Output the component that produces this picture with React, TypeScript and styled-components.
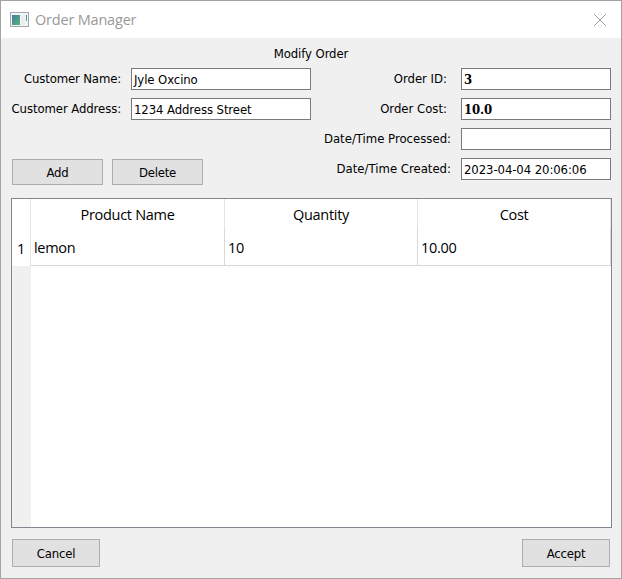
import React from 'react';
import styled, { createGlobalStyle } from 'styled-components';

const Global = createGlobalStyle`
  *, *::before, *::after { box-sizing: border-box; }
  body { margin: 0; overflow: hidden; }
`;

const Dialog = styled.main`
  width: 622px;
  height: 579px;
  border: 1px solid #a3a3a3;
  background: #f0f0f0;
  color: #000;
  font: 13px/16px 'DejaVu Sans Condensed', 'DejaVu Sans', sans-serif;
  font-stretch: condensed;
  letter-spacing: -0.09px;
  display: flex;
  flex-direction: column;
`;
const TitleBar = styled.header`
  height: 37px;
  flex: none;
  display: flex;
  align-items: center;
  padding: 0 14px 0 9px;
  background: #fff;
`;
const Title = styled.h1`
  margin: 0 auto 0 6px;
  font: 400 14.5px/20px 'Open Sans', 'Noto Sans', sans-serif;
  letter-spacing: -0.2px;
  color: #999;
`;
const Heading = styled.h2`
  margin: 8px 0 6px;
  height: 16px;
  font: inherit;
  text-align: center;
`;
const Form = styled.section`
  display: flex;
  justify-content: space-between;
  height: 130px;
  padding: 0 10px;
`;
const Fields = styled.div<{ $label: number; $field: number }>`
  display: grid;
  grid-template-columns: ${p => p.$label}px ${p => p.$field}px;
  grid-auto-rows: 22px;
  row-gap: 8px;
`;
const Label = styled.label<{ $gap: number; $track?: number }>`
  text-align: right;
  white-space: nowrap;
  line-height: 22px;
  padding-right: ${p => p.$gap}px;
  letter-spacing: ${p => p.$track ?? -0.09}px;
`;
const Field = styled.div<{ $strong?: boolean }>`
  border: 1px solid #7a7a7a;
  background: #fff;
  padding: 0 2px;
  white-space: nowrap;
  line-height: 22px;
  ${p => p.$strong && `font-family: 'DejaVu Serif', serif; font-weight: 700;`}
`;
const EditActions = styled.div`
  display: flex;
  gap: 9px;
  padding: 39px 0 0 1px;
`;
const Button = styled.button<{ $w: number; $h: number }>`
  width: ${p => p.$w}px;
  height: ${p => p.$h}px;
  padding: 2px 0 0;
  border: 1px solid #adadad;
  background: #e1e1e1;
  color: #000;
  font: inherit;
  letter-spacing: -0.2px;
`;
const TableFrame = styled.section`
  margin: 0 9px 0 10px;
  height: 330px;
  border: 1px solid #828790;
  background: linear-gradient(90deg, #f0f0f0 19px, #fff 19px);
`;
const Table = styled.div`
  display: grid;
  grid-template-columns: 19px 194px 193px 193px;
  grid-template-rows: 30px 37px;
  font: 14.5px/20px 'Open Sans', 'Noto Sans', sans-serif;
  letter-spacing: -0.3px;
`;
const HeaderCell = styled.div`
  background: #fff;
  border-right: 1px solid #e5e5e5;
  text-align: center;
  padding-top: 6px;
`;
const Cell = styled.div`
  background: #fff;
  border: solid #d8d8d8;
  border-width: 0 1px 1px 0;
  padding: 9px 0 0 3px;
`;
const RowNumber = styled.div`
  background: #fff;
  border-right: 1px solid #e5e5e5;
  padding: 10px 0 0;
  text-align: center;
`;
const Footer = styled.footer`
  display: flex;
  justify-content: space-between;
  padding: 11px 11px 0;
`;

function AppIcon() {
  return (
    <svg width="19" height="15" viewBox="0 0 19 15" shapeRendering="crispEdges">
      <defs>
        <linearGradient id="screen" x1="0" y1="0" x2="1" y2="1">
          <stop offset="0" stopColor="#4779a0" />
          <stop offset="1" stopColor="#55b67b" />
        </linearGradient>
      </defs>
      <rect x="0.5" y="0.5" width="18" height="14" fill="#f4f5f6" stroke="#a0a7ad" />
      <rect x="2" y="3" width="8" height="10" fill="url(#screen)" />
      <rect x="11" y="3" width="4" height="10" fill="#eceeee" />
      <rect x="16" y="3" width="1" height="6" fill="url(#screen)" />
    </svg>
  );
}

function CloseIcon() {
  return (
    <svg width="14" height="14" viewBox="0 0 14 14" fill="none" stroke="#999">
      <path d="M1 1 13 13M13 1 1 13" />
    </svg>
  );
}

export default function App() {
  return (
    <>
      <Global />
      <Dialog>
        <TitleBar>
          <AppIcon />
          <Title>Order Manager</Title>
          <CloseIcon />
        </TitleBar>
        <Heading>Modify Order</Heading>
        <Form>
          <div>
            <Fields $label={120} $field={180}>
              <Label $gap={10} $track={-0.14}>Customer Name:</Label>
              <Field>Jyle Oxcino</Field>
              <Label $gap={10}>Customer Address:</Label>
              <Field>1234 Address Street</Field>
            </Fields>
            <EditActions>
              <Button $w={91} $h={26}>Add</Button>
              <Button $w={91} $h={26}>Delete</Button>
            </EditActions>
          </div>
          <Fields $label={140} $field={150}>
            <Label $gap={14} $track={0}>Order ID:</Label>
            <Field $strong>3</Field>
            <Label $gap={14} $track={0}>Order Cost:</Label>
            <Field $strong>10.0</Field>
            <Label $gap={10} $track={0}>Date/Time Processed:</Label>
            <Field />
            <Label $gap={10} $track={0}>Date/Time Created:</Label>
            <Field>2023-04-04 20:06:06</Field>
          </Fields>
        </Form>
        <TableFrame>
          <Table>
            <HeaderCell />
            <HeaderCell>Product Name</HeaderCell>
            <HeaderCell>Quantity</HeaderCell>
            <HeaderCell>Cost</HeaderCell>
            <RowNumber>1</RowNumber>
            <Cell>lemon</Cell>
            <Cell>10</Cell>
            <Cell>10.00</Cell>
          </Table>
        </TableFrame>
        <Footer>
          <Button $w={88} $h={28}>Cancel</Button>
          <Button $w={88} $h={28}>Accept</Button>
        </Footer>
      </Dialog>
    </>
  );
}
